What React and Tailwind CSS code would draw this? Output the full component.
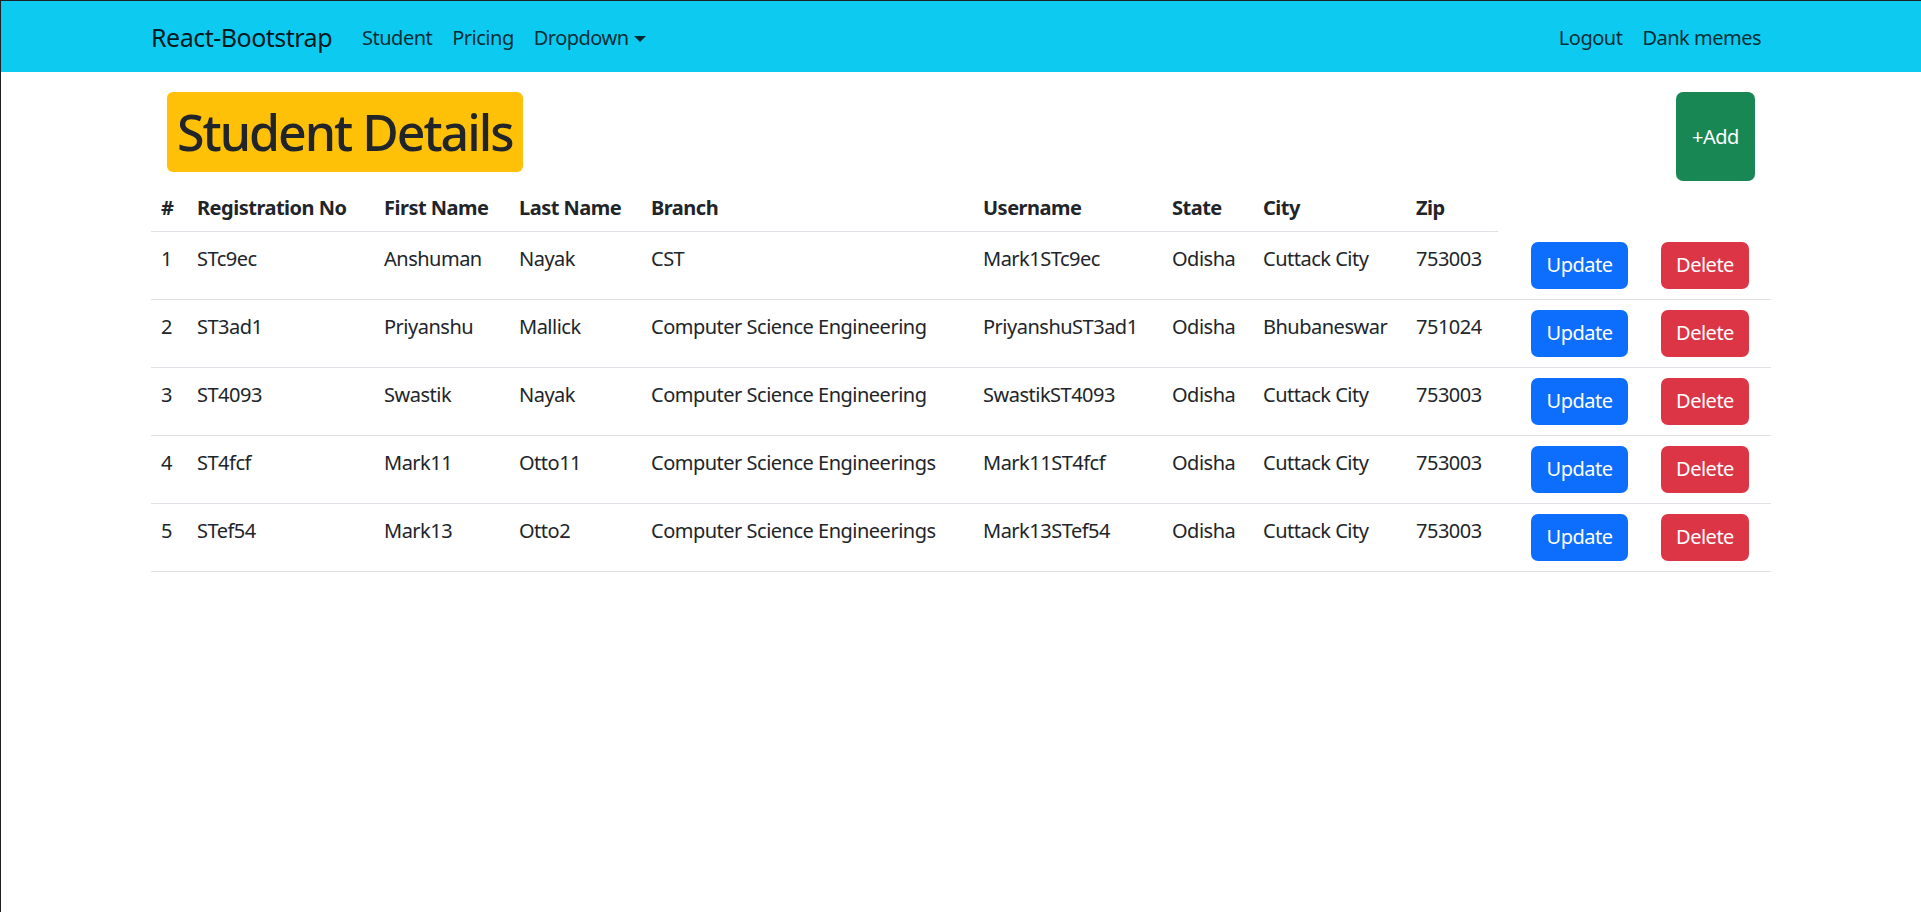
const students = [
  { id: 1, reg: "STc9ec", first: "Anshuman", last: "Nayak", branch: "CST", user: "Mark1STc9ec", state: "Odisha", city: "Cuttack City", zip: "753003" },
  { id: 2, reg: "ST3ad1", first: "Priyanshu", last: "Mallick", branch: "Computer Science Engineering", user: "PriyanshuST3ad1", state: "Odisha", city: "Bhubaneswar", zip: "751024" },
  { id: 3, reg: "ST4093", first: "Swastik", last: "Nayak", branch: "Computer Science Engineering", user: "SwastikST4093", state: "Odisha", city: "Cuttack City", zip: "753003" },
  { id: 4, reg: "ST4fcf", first: "Mark11", last: "Otto11", branch: "Computer Science Engineerings", user: "Mark11ST4fcf", state: "Odisha", city: "Cuttack City", zip: "753003" },
  { id: 5, reg: "STef54", first: "Mark13", last: "Otto2", branch: "Computer Science Engineerings", user: "Mark13STef54", state: "Odisha", city: "Cuttack City", zip: "753003" },
];

const headers = ["#", "Registration No", "First Name", "Last Name", "Branch", "Username", "State", "City", "Zip"];
const widths = [36, 187, 135, 132, 332, 189, 91, 153, 92, 148, 125];

function App() {
  return (
    <div
      className="min-h-screen bg-white border-t border-l border-[#202124] text-[20px] leading-[1.5] tracking-[-0.025em] text-[#212529]"
      style={{ fontFamily: '"Noto Sans", "Open Sans", Arial, sans-serif' }}
    >
      {/* navbar */}
      <nav className="bg-[#0dcaf0] h-[71px]">
        <div className="mx-auto w-[1650px] px-[15px] h-full flex items-center justify-between">
          <div className="flex items-center pt-[2px]">
            <span className="text-[25px] text-black/90 mr-[20px]">React-Bootstrap</span>
            <a className="px-[10px] text-black/80">Student</a>
            <a className="px-[10px] text-black/80">Pricing</a>
            <a className="px-[10px] text-black/80 flex items-center">
              Dropdown
              <span className="ml-[5px] mt-[2px] border-t-[6px] border-t-black/80 border-x-[6px] border-x-transparent"></span>
            </a>
          </div>
          <div className="flex items-center pt-[2px]">
            <a className="px-[10px] text-black/80">Logout</a>
            <a className="px-[10px] text-black/80">Dank memes</a>
          </div>
        </div>
      </nav>

      <div className="mx-auto w-[1650px] px-[15px]">
        <div className="flex items-start justify-between mt-[20px]">
          <h1 className="ml-[16px] bg-[#ffc107] rounded-[6px] px-[10px] py-[10px] text-[50px] leading-[1.2] tracking-[-0.04em] font-medium text-[#212529]">
            Student Details
          </h1>
          <button className="mr-[16px] w-[79px] h-[89px] rounded-[7px] bg-[#198754] text-white text-[20px]">
            +Add
          </button>
        </div>

        <table className="w-[1620px] table-fixed border-collapse">
          <colgroup>
            {widths.map((w, i) => (
              <col key={i} style={{ width: w }} />
            ))}
          </colgroup>
          <thead>
            <tr>
              {headers.map((h) => (
                <th key={h} className="text-left font-bold px-[10px] pt-[12px] pb-[8px] border-b border-[#dee2e6] whitespace-nowrap">
                  {h}
                </th>
              ))}
            </tr>
          </thead>
          <tbody>
            {students.map((s) => (
              <tr key={s.id} className="border-b border-[#dee2e6] align-top">
                <td className="px-[10px] pt-[12px] pb-[8px]">{s.id}</td>
                <td className="px-[10px] pt-[12px] pb-[8px]">{s.reg}</td>
                <td className="px-[10px] pt-[12px] pb-[8px]">{s.first}</td>
                <td className="px-[10px] pt-[12px] pb-[8px]">{s.last}</td>
                <td className="px-[10px] pt-[12px] pb-[8px] whitespace-nowrap">{s.branch}</td>
                <td className="px-[10px] pt-[12px] pb-[8px]">{s.user}</td>
                <td className="px-[10px] pt-[12px] pb-[8px]">{s.state}</td>
                <td className="px-[10px] pt-[12px] pb-[8px]">{s.city}</td>
                <td className="px-[10px] pt-[12px] pb-[8px]">{s.zip}</td>
                <td className="pl-[33px] py-[10px]">
                  <button className="w-[97px] h-[47px] rounded-[7px] bg-[#0d6efd] text-white">Update</button>
                </td>
                <td className="pl-[15px] py-[10px]">
                  <button className="w-[88px] h-[47px] rounded-[7px] bg-[#dc3545] text-white">Delete</button>
                </td>
              </tr>
            ))}
          </tbody>
        </table>
      </div>
    </div>
  );
}

export default App;
